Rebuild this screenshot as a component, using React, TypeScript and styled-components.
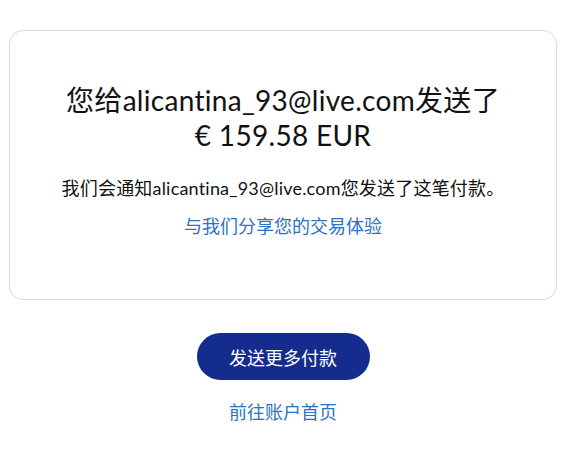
import React from "react";
import styled, { createGlobalStyle } from "styled-components";

const GlobalStyle = createGlobalStyle`
  body {
    margin: 0;
    background: #ffffff;
    font-family: Lato, "Noto Sans", "Noto Sans CJK SC", sans-serif;
    color: #111111;
  }
`;

const Page = styled.div`
  display: flex;
  flex-direction: column;
  align-items: center;
  padding: 30px 7px 0 9px;
`;

const Card = styled.div`
  box-sizing: border-box;
  width: 548px;
  height: 270px;
  border: 1px solid #dedbd6;
  border-radius: 14px;
  padding: 52px 10px 0;
  display: flex;
  flex-direction: column;
  align-items: center;
  text-align: center;
`;

const Heading = styled.h1`
  margin: 0;
  font-size: 28px;
  font-weight: 400;
  line-height: 35px;
  letter-spacing: 0.3px;
  color: #111111;
  white-space: nowrap;
`;

const Message = styled.p`
  margin: 23px 0 0;
  font-size: 18px;
  line-height: 24px;
  letter-spacing: 0.2px;
  color: #111111;
  white-space: nowrap;
`;

const TextLink = styled.a<{ $top: number }>`
  display: block;
  margin-top: ${(p) => p.$top}px;
  font-size: 18px;
  line-height: 24px;
  color: #2a72c4;
  text-decoration: none;
  cursor: pointer;
`;

const PrimaryButton = styled.button`
  margin-top: 33px;
  width: 173px;
  height: 47px;
  border: none;
  border-radius: 24px;
  background: #142c8e;
  color: #ffffff;
  font-family: inherit;
  font-size: 18px;
  cursor: pointer;
`;

export default function App() {
  return (
    <>
      <GlobalStyle />
      <Page>
        <Card>
          <Heading>
            您给alicantina_93@live.com发送了
            <br />€ 159.58 EUR
          </Heading>
          <Message>我们会通知alicantina_93@live.com您发送了这笔付款。</Message>
          <TextLink $top={14}>与我们分享您的交易体验</TextLink>
        </Card>
        <PrimaryButton>发送更多付款</PrimaryButton>
        <TextLink $top={20}>前往账户首页</TextLink>
      </Page>
    </>
  );
}
